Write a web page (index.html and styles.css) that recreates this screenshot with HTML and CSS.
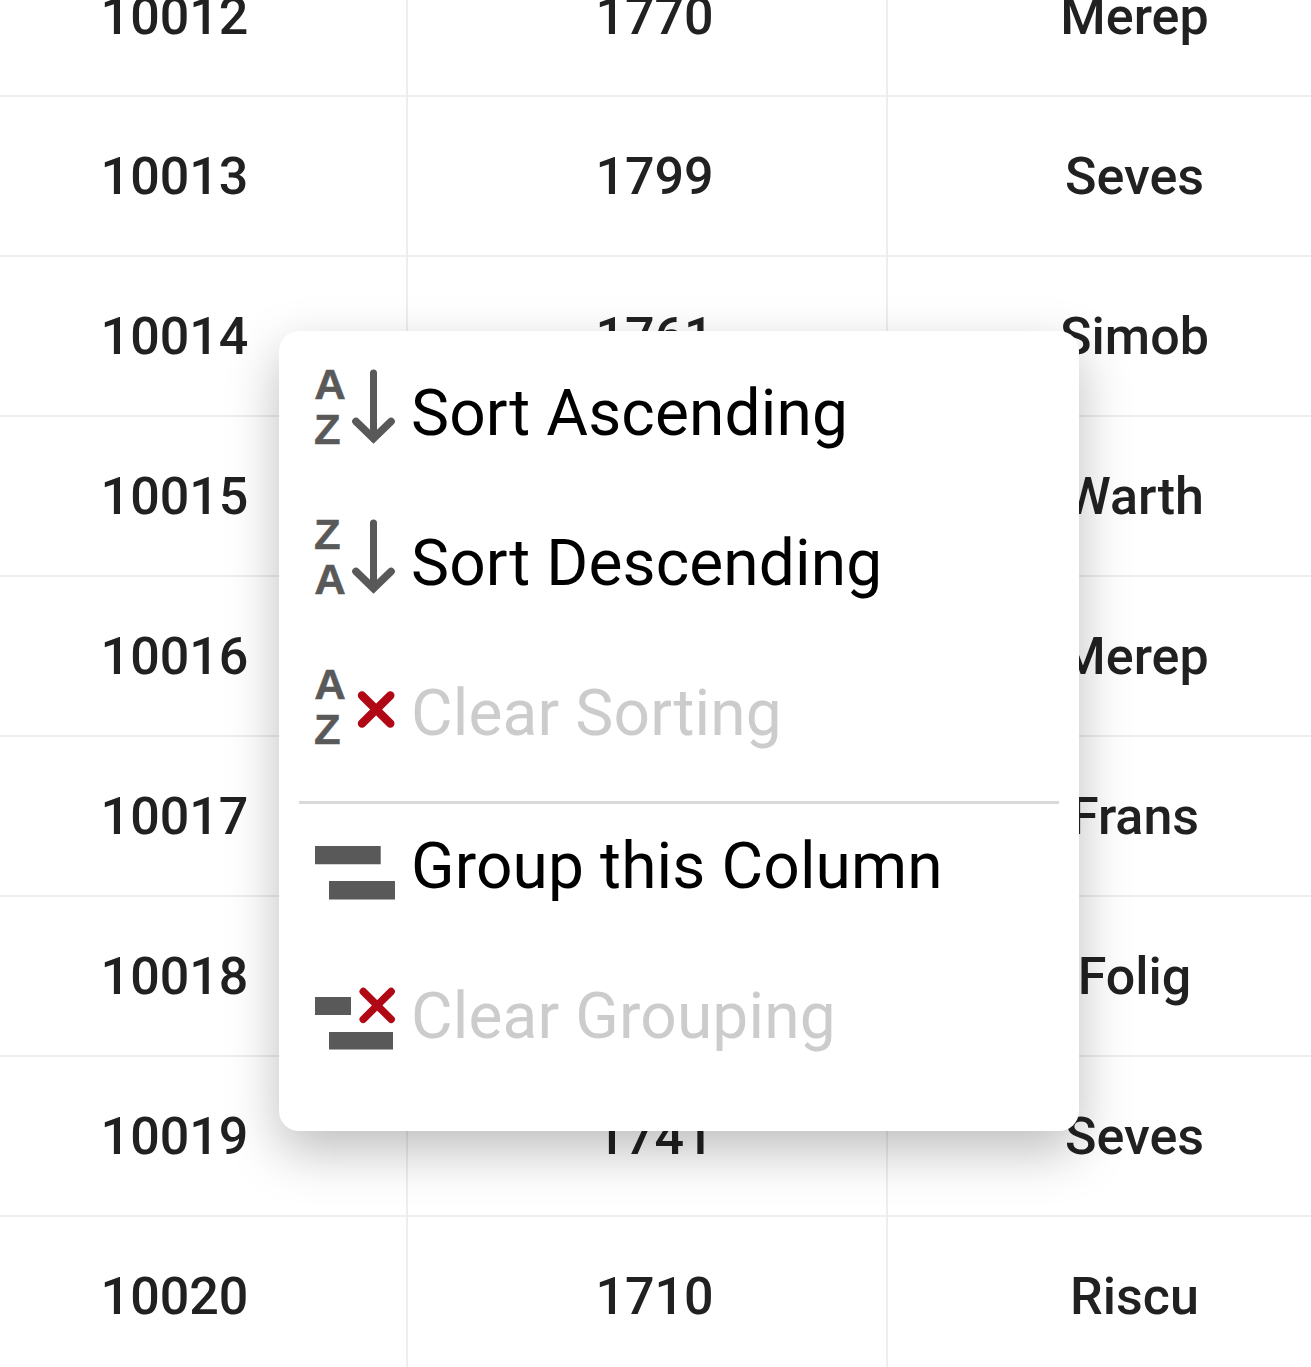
FILE: index.html
```html
<!DOCTYPE html>
<html lang="en">
<head>
<meta charset="utf-8">
<title>Orders</title>
<link rel="stylesheet" href="styles.css">
</head>
<body>
<main class="grid">
  <div class="row"><div class="cell">10012</div><div class="cell">1770</div><div class="cell">Merep</div></div>
  <div class="row"><div class="cell">10013</div><div class="cell">1799</div><div class="cell">Seves</div></div>
  <div class="row"><div class="cell">10014</div><div class="cell">1761</div><div class="cell">Simob</div></div>
  <div class="row"><div class="cell">10015</div><div class="cell"></div><div class="cell">Warth</div></div>
  <div class="row"><div class="cell">10016</div><div class="cell"></div><div class="cell">Merep</div></div>
  <div class="row"><div class="cell">10017</div><div class="cell"></div><div class="cell">Frans</div></div>
  <div class="row"><div class="cell">10018</div><div class="cell"></div><div class="cell">Folig</div></div>
  <div class="row"><div class="cell">10019</div><div class="cell">1741</div><div class="cell">Seves</div></div>
  <div class="row"><div class="cell">10020</div><div class="cell">1710</div><div class="cell">Riscu</div></div>
</main>
<div class="menu" role="menu">
  <div class="item" role="menuitem">
    <svg class="icon" viewBox="0 0 80 100"><text class="letter" x="-.7" y="35.8" textLength="31.6" lengthAdjust="spacingAndGlyphs">A</text><text class="letter" x="-.9" y="80.8" textLength="26.6" lengthAdjust="spacingAndGlyphs">Z</text><path class="arrow" d="M58.5 10V73"/><path class="arrow head" d="M41 58.5L58.5 75.5L76 58.5"/></svg>
    <span class="label">Sort Ascending</span>
  </div>
  <div class="item" role="menuitem">
    <svg class="icon" viewBox="0 0 80 100"><text class="letter" x="-.9" y="35.8" textLength="26.6" lengthAdjust="spacingAndGlyphs">Z</text><text class="letter" x="-.7" y="80.8" textLength="31.6" lengthAdjust="spacingAndGlyphs">A</text><path class="arrow" d="M58.5 10V73"/><path class="arrow head" d="M41 58.5L58.5 75.5L76 58.5"/></svg>
    <span class="label">Sort Descending</span>
  </div>
  <div class="item disabled" role="menuitem">
    <svg class="icon" viewBox="0 0 80 100"><text class="letter" x="-.7" y="35.8" textLength="31.6" lengthAdjust="spacingAndGlyphs">A</text><text class="letter" x="-.9" y="80.8" textLength="26.6" lengthAdjust="spacingAndGlyphs">Z</text><path class="cross bold" d="M47 32.5L75.3 60.5M75.3 32.5L47 60.5"/></svg>
    <span class="label">Clear Sorting</span>
  </div>
  <div class="divider"></div>
  <div class="item" role="menuitem">
    <svg class="icon" viewBox="0 0 80 100"><path class="bar" d="M0 30H65.7V48.3H0ZM14 65.1H80V83.6H14Z"/></svg>
    <span class="label">Group this Column</span>
  </div>
  <div class="item disabled" role="menuitem">
    <svg class="icon" viewBox="0 0 80 100"><path class="bar" d="M0 31H36V49H0ZM14 66H78V83.6H14Z"/><path class="cross" d="M48.2 25.5L76.2 53.3M76.2 25.5L48.2 53.3"/></svg>
    <span class="label">Clear Grouping</span>
  </div>
</div>
</body>
</html>
```
FILE: styles.css
```css
* { box-sizing: border-box; }
body {
  margin: 0;
  height: 1367px;
  overflow: hidden;
  position: relative;
  background: #fff;
  font-family: Roboto, sans-serif;
}
.grid {
  width: 1440px;
  margin: -63px 0 0 -72px;
}
.row {
  display: grid;
  grid-template-columns: repeat(3, 480px);
  height: 160px;
}
.cell {
  display: flex;
  align-items: center;
  justify-content: center;
  padding-left: 15px;
  border-right: 2px solid #eee;
  border-bottom: 2px solid #eee;
  font-size: 52px;
  font-weight: 500;
  color: #212121;
}
.menu {
  position: absolute;
  left: 279px;
  top: 331px;
  width: 800px;
  height: 800px;
  padding: 22px 20px 0;
  border-radius: 20px;
  background: #fff;
  box-shadow: 0 20px 52px rgba(0, 0, 0, .26);
}
.item {
  display: flex;
  align-items: center;
  gap: 16px;
  height: 120px;
  margin-bottom: 30px;
  padding-left: 16px;
  font-size: 64px;
  letter-spacing: .14px;
  color: #000;
  white-space: nowrap;
}
.disabled { margin-bottom: 0; color: #ccc; }
.divider {
  height: 3px;
  margin: 28px 0 2px;
  background: #d9d9d9;
}
.icon {
  flex: none;
  width: 80px;
  height: 100px;
  overflow: visible;
}
.letter {
  font: bold 42px "Liberation Sans", Arial, sans-serif;
  letter-spacing: 0;
  fill: #595959;
  stroke: #595959;
  stroke-width: .5;
}
.bar { fill: #595959; }
.arrow {
  fill: none;
  stroke: #595959;
  stroke-width: 7;
  stroke-linecap: round;
}
.head { stroke-width: 7.6; }
.cross {
  fill: none;
  stroke: #b00814;
  stroke-width: 7.4;
  stroke-linecap: round;
}
.bold { stroke-width: 8.4; }
```
